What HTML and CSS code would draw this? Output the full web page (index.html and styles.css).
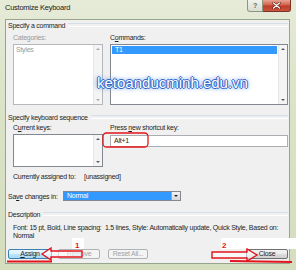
FILE: index.html
```html
<!DOCTYPE html>
<html>
<head>
<meta charset="utf-8">
<link rel="stylesheet" href="styles.css">
</head>
<body>
<div class="window">
  <div class="titlebar">
    <span class="title">Customize Keyboard</span>
    <div class="caption">
      <span class="cap-help">?</span>
      <span class="cap-close">
        <svg width="9" height="7" viewBox="0 0 9 7"><path d="M1.5 1 L7.5 6 M7.5 1 L1.5 6" stroke="#5a2018" stroke-width="2.4" stroke-linecap="round"/><path d="M1.5 1 L7.5 6 M7.5 1 L1.5 6" stroke="#fff" stroke-width="1.3" stroke-linecap="round"/></svg>
      </span>
    </div>
  </div>
  <div class="client">
    <div class="group-head"><span>Specify a command</span></div>
    <div class="cols">
      <div class="col col-left">
        <div class="lbl dim">Categories:</div>
        <div class="list list-big dim-border">
          <div class="items dim">Styles</div>
          <div class="sb"><span class="up dim-arrow"></span><span class="down dim-arrow"></span></div>
        </div>
      </div>
      <div class="col col-right">
        <div class="lbl">C<u>o</u>mmands:</div>
        <div class="list list-big">
          <div class="items"><div class="sel">T1</div></div>
          <div class="sb"><span class="up"></span><span class="down"></span></div>
        </div>
      </div>
    </div>

    <div class="group-head gh2"><span>Specify keyboard sequence</span></div>
    <div class="cols cols2">
      <div class="col col-left">
        <div class="lbl">C<u>u</u>rrent keys:</div>
        <div class="list list-small">
          <div class="items"></div>
          <div class="sb"><span class="up"></span><span class="down"></span></div>
        </div>
      </div>
      <div class="col col-right">
        <div class="lbl">Press <u>n</u>ew shortcut key:</div>
        <div class="textbox">Alt+1</div>
      </div>
    </div>

    <div class="assigned"><span class="assigned-lbl">Currently assigned to:</span><span>[unassigned]</span></div>

    <div class="save-row">
      <span class="save-lbl">Sa<u>v</u>e changes in:</span>
      <div class="combo"><span class="combo-val">Normal</span><span class="combo-btn"></span></div>
    </div>

    <div class="group-head gh3"><span>Description</span></div>
    <div class="desc">Font: 15 pt, Bold, Line spacing:&nbsp; 1.5 lines, Style: Automatically update, Quick Style, Based on:<br>Normal</div>

    <div class="buttons">
      <span class="btn btn-default"><u>A</u>ssign</span>
      <span class="btn btn-dis">Remove</span>
      <span class="btn btn-dis btn-reset">Reset All...</span>
      <span class="btn btn-close">Close</span>
    </div>
  </div>

  <div class="watermark">ketoanducminh.edu.vn</div>

  <svg class="annot" width="296" height="270" viewBox="0 0 296 270">
    <rect x="103" y="133" width="45" height="14" rx="3.5" fill="none" stroke="#e3141b" stroke-width="1.3"/>
    <rect x="72" y="238" width="12" height="11" fill="#fff"/>
    <text x="75" y="247.5" class="num">1</text>
    <polygon points="42,254 51,248 51,251 82,251 82,257 51,257 51,260" fill="rgba(255,255,255,0.55)" stroke="#e3141b" stroke-width="1.4" stroke-linejoin="miter"/>
    <line x1="7" y1="261.5" x2="52" y2="261.5" stroke="#e3141b" stroke-width="2"/>
    <rect x="221" y="238" width="75" height="11" fill="#fff"/>
    <text x="222" y="247.5" class="num">2</text>
    <polygon points="212,252 247,252 247,249 257,255 247,261 247,258 212,258" fill="rgba(255,255,255,0.55)" stroke="#e3141b" stroke-width="1.4"/>
    <line x1="230" y1="261" x2="292" y2="262" stroke="#e3141b" stroke-width="2"/>
  </svg>
</div>
</body>
</html>
```

FILE: styles.css
```css
* { box-sizing: border-box; margin: 0; padding: 0; }
html, body { margin: 0; width: 296px; height: 270px; overflow: hidden; }
body {
  font-family: "Liberation Sans", Arial, sans-serif;
  font-size: 7px;
  letter-spacing: -0.25px;
  color: #1e1e1e;
}
u { text-decoration: underline; text-underline-offset: 1px; }

.window {
  position: relative;
  width: 296px;
  height: 270px;
  background: linear-gradient(#e6ebd8, #dce4c9 30%, #d4ddbd);
}

.titlebar {
  height: 19px;
  display: flex;
  align-items: flex-start;
  padding-left: 5px;
}
.title { line-height: 16px; font-size: 7.5px; color: #1b1b1b; }
.caption { margin-left: auto; margin-right: 5px; display: flex; }
.cap-help {
  width: 16px; height: 12px;
  border: 1px solid #8d977f; border-top: none;
  border-radius: 0 0 0 3px;
  background: linear-gradient(#f1f2ec, #d9ddcf);
  font-size: 7px; font-weight: bold; color: #5c6455;
  display: flex; align-items: center; justify-content: center;
  line-height: 1;
}
.cap-close {
  width: 28px; height: 12px;
  border: 1px solid #7b3328; border-top: none; border-left: none;
  border-radius: 0 0 3px 0;
  background: linear-gradient(#e8a492, #d0634c 45%, #bd3b26 55%, #c9543c);
  display: flex; align-items: center; justify-content: center;
}

.client {
  margin-left: 5px;
  width: 285px;
  height: 245px;
  background: #f0f0f0;
  border: 1px solid #98a48c;
}

.group-head {
  display: flex;
  align-items: center;
  height: 10px;
  padding-left: 2px;
  gap: 3px;
}
.group-head::after {
  content: "";
  flex: 1;
  height: 2px;
  border-top: 1px solid #d5dfe5;
  border-bottom: 1px solid #fff;
  margin-right: 1px;
}
.gh2 { margin-top: 7px; }
.gh3 { margin-top: 8px; }

.cols { display: flex; gap: 7px; padding-left: 7px; padding-right: 1px; }
.col { display: flex; flex-direction: column; }
.col-left { width: 90px; }
.col-right { flex: 1; }
.lbl { height: 10px; line-height: 10px; margin-top: 3px; margin-bottom: 1px; white-space: nowrap; }
.cols2 .lbl { margin-top: 1px; }
.dim { color: #9a9a9a; }

.list {
  display: flex;
  border: 1px solid #828790;
  background: #fff;
}
.list-big { height: 61px; }
.list-small { height: 33px; }
.dim-border { border-color: #b4b8bc; }
.items { flex: 1; padding: 1px 1px; line-height: 8px; }
.items.dim { padding-left: 2px; }
.sel { background: #3399ff; color: #fff; height: 8px; line-height: 8px; padding-left: 3px; }
.sb {
  width: 9px;
  background: #f4f4f4;
  border-left: 1px solid #e6e6e6;
  display: flex;
  flex-direction: column;
  justify-content: space-between;
  align-items: center;
  padding: 3px 0;
}
.up, .down { width: 0; height: 0; border-left: 2px solid transparent; border-right: 2px solid transparent; }
.up { border-bottom: 2px solid #5a5a5a; }
.down { border-top: 2px solid #5a5a5a; }
.up.dim-arrow { border-bottom-color: #a8a8a8; }
.down.dim-arrow { border-top-color: #a8a8a8; }

.textbox {
  height: 12px;
  margin-top: 1px;
  border: 1px solid #abadb3;
  background: #fff;
  line-height: 10px;
  padding-left: 3px;
}

.assigned { margin-top: 5px; padding-left: 7px; height: 10px; line-height: 10px; display: flex; }
.assigned-lbl { width: 71px; }

.save-row { margin-top: 9px; padding-left: 2px; height: 10px; display: flex; align-items: center; }
.save-lbl { width: 55px; }
.combo {
  width: 118px; height: 10px;
  border: 1px solid #828790;
  background: #fff;
  display: flex;
}
.combo-val { flex: 1; background: #3399ff; color: #fff; line-height: 8px; padding-left: 3px; }
.combo-btn {
  width: 9px;
  border-left: 1px solid #a0a6ad;
  background: linear-gradient(#f2f2f2, #d6d6d6);
  display: flex; align-items: center; justify-content: center;
}
.combo-btn::after {
  content: "";
  border-left: 2px solid transparent; border-right: 2px solid transparent;
  border-top: 2px solid #222;
}

.desc { margin-top: 5px; padding-left: 7px; line-height: 8px; white-space: nowrap; }

.buttons { margin-top: 9px; padding-left: 2px; padding-right: 1px; display: flex; }
.btn {
  height: 10px;
  line-height: 8px;
  text-align: center;
  border: 1px solid #707070;
  border-radius: 2px;
  background: linear-gradient(#f2f2f2, #ebebeb 50%, #dddddd 51%, #cfcfcf);
}
.btn-default { width: 44px; border-color: #3c7fb1; background: linear-gradient(#eaf6fd, #d9f0fc 50%, #bee6fd 51%, #a7d9f5); }
.btn-dis { width: 42px; margin-left: 6px; border-color: #adb2b5; background: #f4f4f4; color: #a3a3a3; }
.btn-reset { width: 40px; margin-left: 8px; }
.btn-close { width: 42px; margin-left: auto; }

.watermark {
  position: absolute;
  left: 97px;
  top: 74px;
  font-size: 15px;
  line-height: 17px;
  letter-spacing: 0;
  color: #ffffff;
  text-shadow: 1px 0 0 #2e66cc, -1px 0 0 #2e66cc, 0 1px 0 #2e66cc, 0 -1px 0 #2e66cc, 0 0 4px #5b8fe2, 0 0 6px #8fb2ee;
}

.annot { position: absolute; left: 0; top: 0; }
.num { font-family: "Liberation Sans", Arial, sans-serif; font-size: 8px; font-weight: bold; fill: #e3141b; }
```
